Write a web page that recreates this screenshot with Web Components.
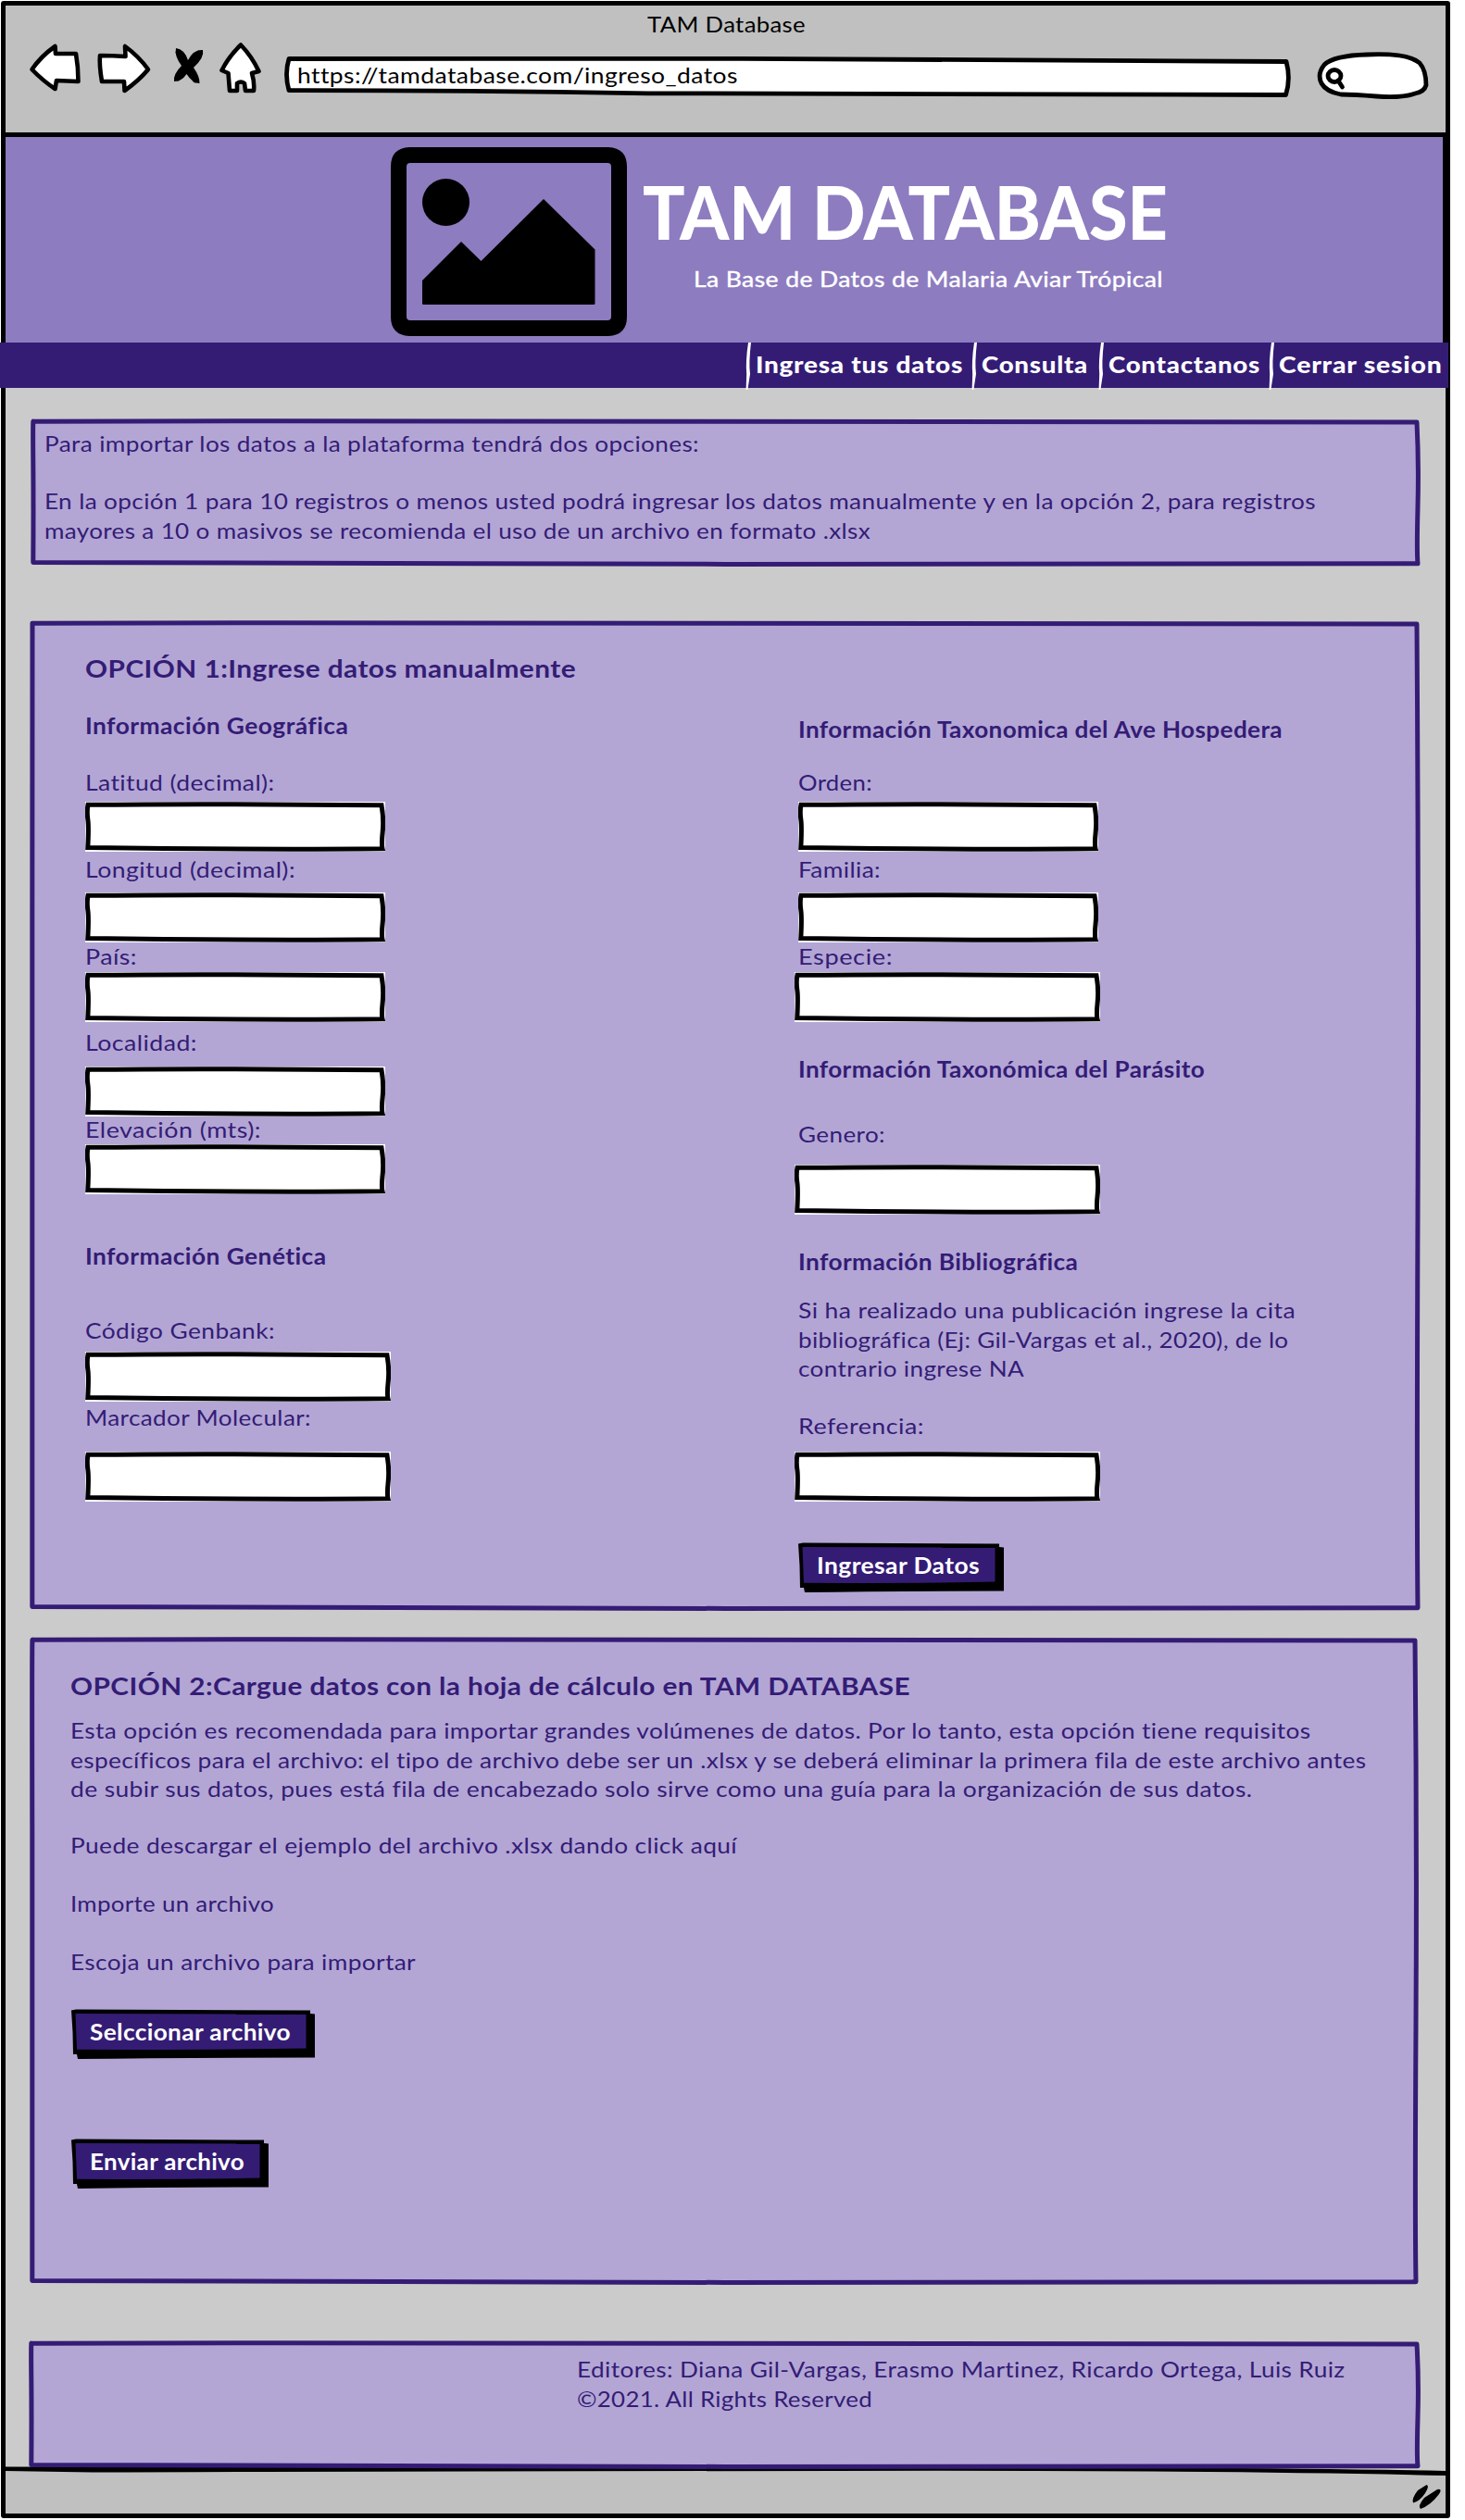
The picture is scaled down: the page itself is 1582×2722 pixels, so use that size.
<!DOCTYPE html>
<html lang="es">
<head>
<meta charset="utf-8">
<title>TAM Database</title>
<style>
  body { margin: 0; background: #fff; width: 1582px; height: 2722px; overflow: hidden; font-family: Lato, "Open Sans", sans-serif; color: #341c75; }
</style>
</head>
<body>
<tam-browser></tam-browser>
<script>
const define = (name, html, setup) => {
  const template = document.createElement('template');
  template.innerHTML = html;
  customElements.define(name, class extends HTMLElement {
    connectedCallback() {
      if (this.shadowRoot) return;
      this.attachShadow({ mode: 'open' }).append(template.content.cloneNode(true));
      if (setup) setup(this, this.shadowRoot);
    }
  });
};
const num = (el, name, fallback = 0) => Number(el.getAttribute(name) ?? fallback);

/* One line of text, widened or narrowed so that it fills its measure. */
define('sk-text', `<style>
  :host { display: block; height: 32px; white-space: nowrap; font-size: 24px; line-height: 32px; }
  :host([kind=sub]) { font-weight: 700; }
  :host([kind=nav]) { font-weight: 900; }
  :host([kind=head]) { font-size: 27.5px; line-height: 36px; height: 36px; font-weight: 700; }
  :host([kind=title]) { font-size: 80px; line-height: 80px; height: 80px; font-weight: 900; }
  span { display: inline-block; transform-origin: 0 50%; }
</style><span><slot></slot></span>`, (el, root) => {
  const mt = num(el, 'mt');
  if (mt) el.style.marginTop = mt + 'px';
  const span = root.querySelector('span');
  const want = num(el, 'w');
  if (want) {
    const count = el.textContent.length;
    const width = span.getBoundingClientRect().width;
    const spacing = Math.max(0, (want + 2 - width) / count * .25);
    span.style.letterSpacing = spacing.toFixed(3) + 'px';
    span.style.transform = `scaleX(${((want + 2) / (width + spacing * count)).toFixed(4)})`;
  }
});

/* Hand-drawn box; content is laid over the outline. */
define('sk-box', `<style>
  :host { display: grid; position: relative; z-index: 1; }
  svg, div { grid-area: 1 / 1; }
  svg { display: block; }
  div { min-width: 0; }
</style><svg></svg><div><slot></slot></div>`, (el, root) => {
  const w = num(el, 'w'), h = num(el, 'h');
  el.style.width = w + 'px';
  el.style.height = h + 'px';
  el.style.marginTop = num(el, 'mt') + 'px';
  el.style.marginLeft = num(el, 'ml') + 'px';
  const svg = root.querySelector('svg');
  svg.setAttribute('width', w);
  svg.setAttribute('height', h);
  svg.innerHTML = `<path d="M3 3.2 C${w*.3} 2.2 ${w*.55} 2.3 ${w-4} 4 Q${w-1.8} ${h*.3} ${w-3} ${h*.6} T${w-3} ${h-3.2} C${w*.6} ${h-2} ${w*.4} ${h-2.3} 2.8 ${h-4.5} Q3.2 ${h*.6} 2.8 ${h*.3} T3 3.2Z" fill="#b3a6d5" stroke="#341c75" stroke-width="5" stroke-linejoin="round"/>`;
  root.querySelector('div').style.padding = el.getAttribute('pad') || '0';
});

define('sk-input', `<style>:host { display: block; } svg { display: block; }</style><svg></svg>`, (el, root) => {
  const w = num(el, 'w', 324), h = 54;
  el.style.height = h + 'px';
  el.style.marginTop = num(el, 'mt') + 'px';
  el.style.marginLeft = num(el, 'ml') + 'px';
  const svg = root.querySelector('svg');
  svg.setAttribute('width', w);
  svg.setAttribute('height', h);
  svg.innerHTML = `<rect width="${w}" height="${h}" fill="#fff"/><path d="M3 3.3 C${w*.3} 2.2 ${w*.6} 2.4 ${w-4} 3.8 Q${w-1.4} ${h*.35} ${w-2.8} ${h*.6} T${w-3} ${h-3.2} C${w*.65} ${h-2.2} ${w*.45} ${h-2.4} 2.8 ${h-4.5} Q4 ${h*.5} 2.8 ${h*.35} T3 3.3Z" fill="#fff" stroke="#000" stroke-width="5" stroke-linejoin="miter"/>`;
});

define('sk-button', `<style>
  :host { display: grid; color: #fff; font-weight: 700; }
  svg, div { grid-area: 1 / 1; } svg { display: block; }
  div { padding: 9px 0 0 20px; }
</style><svg></svg><div><slot></slot></div>`, (el, root) => {
  const w = num(el, 'w'), h = 54;
  el.style.width = w + 'px';
  el.style.height = h + 'px';
  el.style.marginTop = num(el, 'mt') + 'px';
  el.style.marginLeft = num(el, 'ml') + 'px';
  const svg = root.querySelector('svg');
  svg.setAttribute('width', w);
  svg.setAttribute('height', h);
  svg.innerHTML = `<path d="M0 1.5 L5 .4 ${w-5} 1.6 ${w-5} 5 ${w} 5.5 ${w} 52.5 Q${w*.4} 52.6 7 54 L6 49 2 49 Q2 25 0 1.5Z"/><path d="M4.5 5 L${w-9.5} 5.6 ${w-9.5} 42.6 Q${w*.6} 44.2 6 43.8 Z" fill="#341c75"/>`;
});

define('tam-chrome', `<style>
  :host { display: block; height: 136.5px; background: #c0c0c0; border-bottom: 5px solid #000; color: #000; }
  .title { display: flex; padding: 4px 0 0 693px; }
  .bar { display: flex; margin: 4px 0 0 24px; }
  svg { display: block; overflow: visible; flex: none; }
  .url { display: grid; margin-left: 16px; width: 1090px; }
  .url > * { grid-area: 1 / 1; }
  .url sk-text { padding: 19px 0 0 15px; }
  .search { margin-left: 24px; }
</style>
<div class="title"><sk-text w="169">TAM Database</sk-text></div>
<div class="bar">
  <svg width="260" height="60" viewBox="30 46 260 60" fill="#fff" stroke="#000" stroke-width="4.6" stroke-linejoin="round">
    <path d="M59.5 50 L60 58 82 58 Q84.5 72 84.5 88 L61 87 59.5 96 Q46 87 34.500 75 Q44 61 59.5 50Z"/>
    <path d="M135 50 L135.500 61 Q121 60 108 60 Q107 70 110 88 L134 88 134.5 98 Q150 87 160 75 Q150 61 135 50Z"/>
    <path d="M260 48.500 Q272 61 279.500 77 L272 79 Q275 89 274 98 L265 98 264 90 Q260 87 256 90 L256 98 248 98 246.500 79 239.500 76 Q247 61 260 48.500Z"/>
    <path d="M190 52 Q199 53 203 65 Q209 53 219 54 Q221 62 209 73 Q216 83 215.500 90 Q208 90 201.500 80 Q196 88 188 88 Q187 80 196 71 Q188 60 190 52Z" fill="#000" stroke="none"/>
    <path d="M193 57 L211 86 M215 58 L192 84" stroke-width="6.500" stroke-linecap="round"/>
  </svg>
  <div class="url">
    <svg width="1090" height="60" viewBox="306 46 1090 60" fill="#fff" stroke="#000" stroke-width="4.8" stroke-linejoin="round">
      <path d="M312 63.5 L800 63.3 Q1080 65 1389 66.5 Q1394 85 1388.5 102.5 Q1000 103 700 100.8 Q500 97.5 312 97.6 Q307 80 312 63.5Z"/>
    </svg>
    <sk-text w="473">https://tamdatabase.com/ingreso_datos</sk-text>
  </div>
  <svg class="search" width="126" height="60" viewBox="1420 46 126 60" fill="#fff" stroke="#000" stroke-width="4.8">
    <path d="M1448 102 Q1432 99 1427 90 Q1422 80 1430 70 Q1440 60 1476 59 Q1520 57 1533 68 Q1540 76 1540 92 Q1538 99 1528 101 Q1514 106 1486 104 Q1462 102 1448 102Z"/>
    <ellipse cx="1441" cy="82" rx="7" ry="6.5"/><path d="M1445 87 L1449.500 94" stroke-linecap="round"/>
  </svg>
</div>`);

define('tam-banner', `<style>
  :host { display: flex; box-sizing: border-box; height: 223.5px; padding: 9.5px 0 0 414px; gap: 14px; background: #8d7cc0; border-right: 3px solid #000; color: #fff; }
  svg { display: block; }
  .text { padding-top: 31px; }
  .sub { margin: 17px 0 0 55px; -webkit-text-stroke: .4px #fff; }
</style>
<svg width="260" height="208" viewBox="420 157 260 208">
  <path fill-rule="evenodd" d="M442 159 H657 Q677 160 677 180 V342 Q677 362 657 363 H442 Q422 362 422 342 V180 Q422 160 442 159Z M443 176 Q439 176 439 180 V342 Q439 346 443 346 H656 Q660 346 660 342 V180 Q660 176 656 176Z"/>
  <circle cx="481.5" cy="218.5" r="25.5"/>
  <path d="M456 303 L498 261 519.5 282 587 215 642.5 269.5 V328 Q642.5 329 641 329 H457.5 Q456 329 456 328Z"/>
</svg>
<div class="text">
  <sk-text kind="title" w="565">TAM DATABASE</sk-text>
  <div class="sub"><sk-text w="505">La Base de Datos de Malaria Aviar Trópical</sk-text></div>
</div>`);

define('tam-nav-item', `<style>
  :host { display: flex; flex: none; color: #fff; }
  svg { display: block; overflow: visible; margin-right: 5px; }
  .label { padding-top: 8px; }
</style>
<svg width="6" height="48" viewBox="0 0 6 48"><path d="M3 0 L6 0 Q3.4 22 5 34 L2.4 51 .6 51 1.2 34 Q0 20 3 0Z" fill="#fff"/></svg>
<div class="label"><slot></slot></div>`, el => {
  el.style.width = num(el, 'w') + 'px';
});

define('tam-nav', `<style>
  :host { display: flex; position: relative; z-index: 2; width: 1564px; height: 49px; margin: -1px 0 0 -6px; background: #341c75; box-sizing: border-box; padding-left: 805px; }
  sk-text { position: relative; }
</style>
<tam-nav-item w="244"><sk-text kind="nav" w="222">Ingresa tus datos</sk-text></tam-nav-item>
<tam-nav-item w="136.5"><sk-text kind="nav" w="113">Consulta</sk-text></tam-nav-item>
<tam-nav-item w="184.5"><sk-text kind="nav" w="162">Contactanos</sk-text></tam-nav-item>
<tam-nav-item w="194"><sk-text kind="nav" w="174.5">Cerrar sesion</sk-text></tam-nav-item>`);

define('tam-manual-form', `<style>
  :host { display: grid; grid-template-columns: 766px 1fr; }
  .right sk-text { margin-left: 4px; }
  .right sk-button sk-text { margin-left: 0; }
</style>
<div>
  <sk-text kind="sub" mt="28" w="282">Información Geográfica</sk-text>
  <sk-text mt="29" w="203">Latitud (decimal):</sk-text>
  <sk-input mt="5"></sk-input>
  <sk-text mt="3" w="225">Longitud (decimal):</sk-text>
  <sk-input mt="9"></sk-input>
  <sk-text mt="-1" w="54">País:</sk-text>
  <sk-input mt="1"></sk-input>
  <sk-text mt="6" w="119">Localidad:</sk-text>
  <sk-input mt="10"></sk-input>
  <sk-text mt="-2" w="188">Elevación (mts):</sk-text>
  <sk-input></sk-input>
  <sk-text kind="sub" mt="51" w="259">Información Genética</sk-text>
  <sk-text mt="48" w="203">Código Genbank:</sk-text>
  <sk-input mt="7" w="330"></sk-input>
  <sk-text mt="1" w="242">Marcador Molecular:</sk-text>
  <sk-input mt="21" w="330"></sk-input>
</div>
<div class="right">
  <sk-text kind="sub" mt="32" w="521">Información Taxonomica del Ave Hospedera</sk-text>
  <sk-text mt="25" w="78">Orden:</sk-text>
  <sk-input mt="5" ml="4"></sk-input>
  <sk-text mt="3" w="87">Familia:</sk-text>
  <sk-input mt="9" ml="4"></sk-input>
  <sk-text mt="-1" w="100">Especie:</sk-text>
  <sk-input mt="1" w="330"></sk-input>
  <sk-text kind="sub" mt="35" w="437">Información Taxonómica del Parásito</sk-text>
  <sk-text mt="38" w="92">Genero:</sk-text>
  <sk-input mt="17" w="330"></sk-input>
  <sk-text kind="sub" mt="35" w="300">Información Bibliográfica</sk-text>
  <sk-text mt="20" w="535">Si ha realizado una publicación ingrese la cita</sk-text>
  <sk-text w="527">bibliográfica (Ej: Gil-Vargas et al., 2020), de lo</sk-text>
  <sk-text mt="-1" w="242">contrario ingrese NA</sk-text>
  <sk-text mt="30" w="134">Referencia:</sk-text>
  <sk-input mt="12" w="330"></sk-input>
  <sk-button mt="44" ml="4" w="222"><sk-text w="174">Ingresar Datos</sk-text></sk-button>
</div>`);

define('tam-page', `<style>:host { display: flow-root; background: #cbcbcb; height: 2245px; }</style>
<sk-box w="1501" h="160" mt="33" ml="27" pad="11px 0 0 15px">
  <sk-text w="705">Para importar los datos a la plataforma tendrá dos opciones:</sk-text>
  <sk-text mt="30" w="1371">En la opción 1 para 10 registros o menos usted podrá ingresar los datos manualmente y en la opción 2, para registros</sk-text>
  <sk-text w="890">mayores a 10 o masivos se recomienda el uso de un archivo en formato .xlsx</sk-text>
</sk-box>
<sk-box w="1502" h="1070" mt="58" ml="26" pad="34px 0 0 60px">
  <sk-text kind="head" w="528">OPCIÓN 1:Ingrese datos manualmente</sk-text>
  <tam-manual-form></tam-manual-form>
</sk-box>
<sk-box w="1500" h="700" mt="28" ml="26" pad="35px 0 0 44px">
  <sk-text kind="head" w="905">OPCIÓN 2:Cargue datos con la hoja de cálculo en TAM DATABASE</sk-text>
  <sk-text mt="14" w="1338">Esta opción es recomendada para importar grandes volúmenes de datos. Por lo tanto, esta opción tiene requisitos</sk-text>
  <sk-text w="1397">específicos para el archivo: el tipo de archivo debe ser un .xlsx y se deberá eliminar la primera fila de este archivo antes</sk-text>
  <sk-text mt="-1" w="1274">de subir sus datos, pues está fila de encabezado solo sirve como una guía para la organización de sus datos.</sk-text>
  <sk-text mt="29" w="718">Puede descargar el ejemplo del archivo .xlsx dando click aquí</sk-text>
  <sk-text mt="31" w="218">Importe un archivo</sk-text>
  <sk-text mt="31" w="371">Escoja un archivo para importar</sk-text>
  <sk-button mt="35" ml="1" w="263"><sk-text w="215">Selccionar archivo</sk-text></sk-button>
  <sk-button mt="86" ml="1" w="213"><sk-text w="165">Enviar archivo</sk-text></sk-button>
</sk-box>
<sk-box w="1503" h="139" mt="60" ml="25" pad="15px 0 0 592px">
  <sk-text w="828">Editores: Diana Gil-Vargas, Erasmo Martinez, Ricardo Ortega, Luis Ruiz</sk-text>
  <sk-text w="317">©2021. All Rights Reserved</sk-text>
</sk-box>`);

define('tam-status', `<style>:host { display: block; height: 51px; background: #c0c0c0; } svg { display: block; overflow: visible; }</style>
<svg width="1556" height="51" viewBox="6 2664 1556 51">
  <path d="M6 2664 H1561 V2670 Q1300 2666 1000 2666 H6Z" fill="#cbcbcb"/>
  <path d="M5 2664.5 Q300 2665 900 2665 Q1300 2664 1562 2669 V2674 Q1300 2668 900 2669 Q300 2669.500 100 2670.500 L5 2669Z"/>
  <path d="M1540.500 2684 Q1544 2685 1539 2693 Q1533 2702 1526 2703.500 Q1524 2699 1531 2690Z M1552 2689 Q1558 2688 1554 2694 Q1545 2706 1534 2710 Q1530.500 2707 1538 2698Z"/>
</svg>`);

define('tam-browser', `<style>
  :host { display: block; box-sizing: border-box; width: 1565px; height: 2719px; margin: 1px 0 0 1px; border: 5px solid #000; border-radius: 3px; }
</style>
<tam-chrome></tam-chrome>
<tam-banner></tam-banner>
<tam-nav></tam-nav>
<tam-page></tam-page>
<tam-status></tam-status>`);
</script>
</body>
</html>
